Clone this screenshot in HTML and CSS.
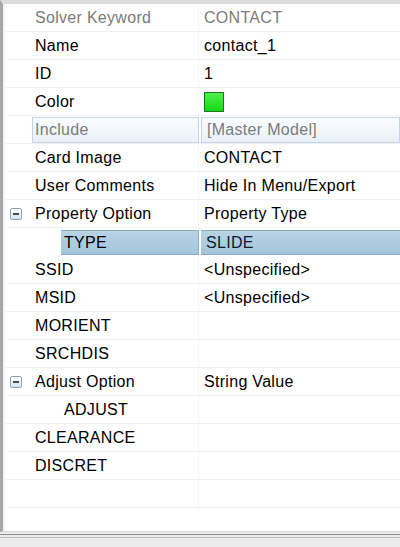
FILE: index.html
```html
<!DOCTYPE html>
<html lang="en">
<head>
    <meta charset="UTF-8">
    <title>Contact Properties</title>
    <link rel="stylesheet" href="styles.css">
</head>
<body>

    <div class="panel">
        <div class="rows">
            <div class="row muted"><span class="icon"></span><span class="label">Solver Keyword</span><span class="value">CONTACT</span></div>
            <div class="row"><span class="icon"></span><span class="label">Name</span><span class="value">contact_1</span></div>
            <div class="row"><span class="icon"></span><span class="label">ID</span><span class="value">1</span></div>
            <div class="row"><span class="icon"></span><span class="label">Color</span><span class="value"><span class="swatch"></span></span></div>
            <div class="row muted readonly"><span class="icon"></span><span class="label">Include</span><span class="value">[Master Model]</span></div>
            <div class="row"><span class="icon"></span><span class="label">Card Image</span><span class="value">CONTACT</span></div>
            <div class="row"><span class="icon"></span><span class="label">User Comments</span><span class="value">Hide In Menu/Export</span></div>
            <div class="row"><span class="icon"><span class="toggle"></span></span><span class="label">Property Option</span><span class="value">Property Type</span></div>
            <div class="row child selected"><span class="icon"></span><span class="label">TYPE</span><span class="value">SLIDE</span></div>
            <div class="row"><span class="icon"></span><span class="label">SSID</span><span class="value">&lt;Unspecified&gt;</span></div>
            <div class="row"><span class="icon"></span><span class="label">MSID</span><span class="value">&lt;Unspecified&gt;</span></div>
            <div class="row"><span class="icon"></span><span class="label">MORIENT</span><span class="value"></span></div>
            <div class="row"><span class="icon"></span><span class="label">SRCHDIS</span><span class="value"></span></div>
            <div class="row"><span class="icon"><span class="toggle"></span></span><span class="label">Adjust Option</span><span class="value">String Value</span></div>
            <div class="row child"><span class="icon"></span><span class="label">ADJUST</span><span class="value"></span></div>
            <div class="row"><span class="icon"></span><span class="label">CLEARANCE</span><span class="value"></span></div>
            <div class="row"><span class="icon"></span><span class="label">DISCRET</span><span class="value"></span></div>
            <div class="row"><span class="icon"></span><span class="label"></span><span class="value"></span></div>
        </div>
    </div>
    <div class="statusbar"></div>

</body>
</html>
```

FILE: styles.css
```css
body {
    margin: 0;
    background-color: #ececec;
    font-family: "Liberation Sans", Arial, sans-serif;
    font-size: 16px;
    letter-spacing: 0.3px;
    color: #000;
}
.panel {
    height: 527px;
    background-color: #fff;
    border-top: 4px solid #dcdcdc;
    border-left: 3px solid #a6a6a6;
    border-bottom: 1px solid #d6d6d6;
    box-shadow: inset 2px 0 0 #f4f4f4;
}
.rows {
    display: flex;
    flex-direction: column;
}
.row {
    display: grid;
    grid-template-columns: 29px 167px 1fr;
    height: 28px;
    border-bottom: 1px solid #eef2f5;
    box-sizing: border-box;
}
.row > span {
    display: flex;
    align-items: center;
    padding-top: 1px;
}
.label {
    padding-left: 3px;
    border-right: 1px solid #f5f6f8;
}
.value {
    padding-left: 5px;
}
.muted {
    color: #7b7b7b;
}
.child .label {
    padding-left: 32px;
}
.icon {
    justify-content: center;
}
.toggle {
    width: 10px;
    height: 10px;
    border: 1px solid #9aa2ab;
    border-radius: 2px;
    background: linear-gradient(#ffffff, #dfe3e8);
    position: relative;
    margin-left: -4px;
}
.toggle::after {
    content: "";
    position: absolute;
    left: 2px;
    top: 4px;
    width: 6px;
    height: 2px;
    background-color: #4a4a4a;
}
.swatch {
    width: 18px;
    height: 18px;
    border: 1px solid #1a7a1a;
    background: linear-gradient(#4cf24c, #18d818);
}
.readonly .label,
.readonly .value {
    background: linear-gradient(#fbfdff, #e9f0f8);
    border: 1px solid #c4d4e8;
    margin: 1px 0 0;
    padding-top: 0;
}
.readonly .label {
    padding-left: 2px;
}
.readonly .value {
    margin-left: 2px;
}
.selected {
    border-bottom-color: #fff;
}
.selected .label,
.selected .value {
    background: linear-gradient(#b8d3e4, #a4c5da);
    border-top: 1px solid #8eabc4;
    border-bottom: 1px solid #8eabc4;
    margin: 2px 0 0;
    padding-top: 0;
}
.selected.child .label {
    margin-left: 29px;
    padding-left: 3px;
    border-right: 1px solid #8eabc4;
}
.selected .value {
    margin-left: 2px;
    color: #0b1a33;
}
.statusbar {
    height: 2px;
    border-top: 1px solid #8a8a8a;
    border-bottom: 1px solid #bdbdbd;
    margin-top: 2px;
}
```
